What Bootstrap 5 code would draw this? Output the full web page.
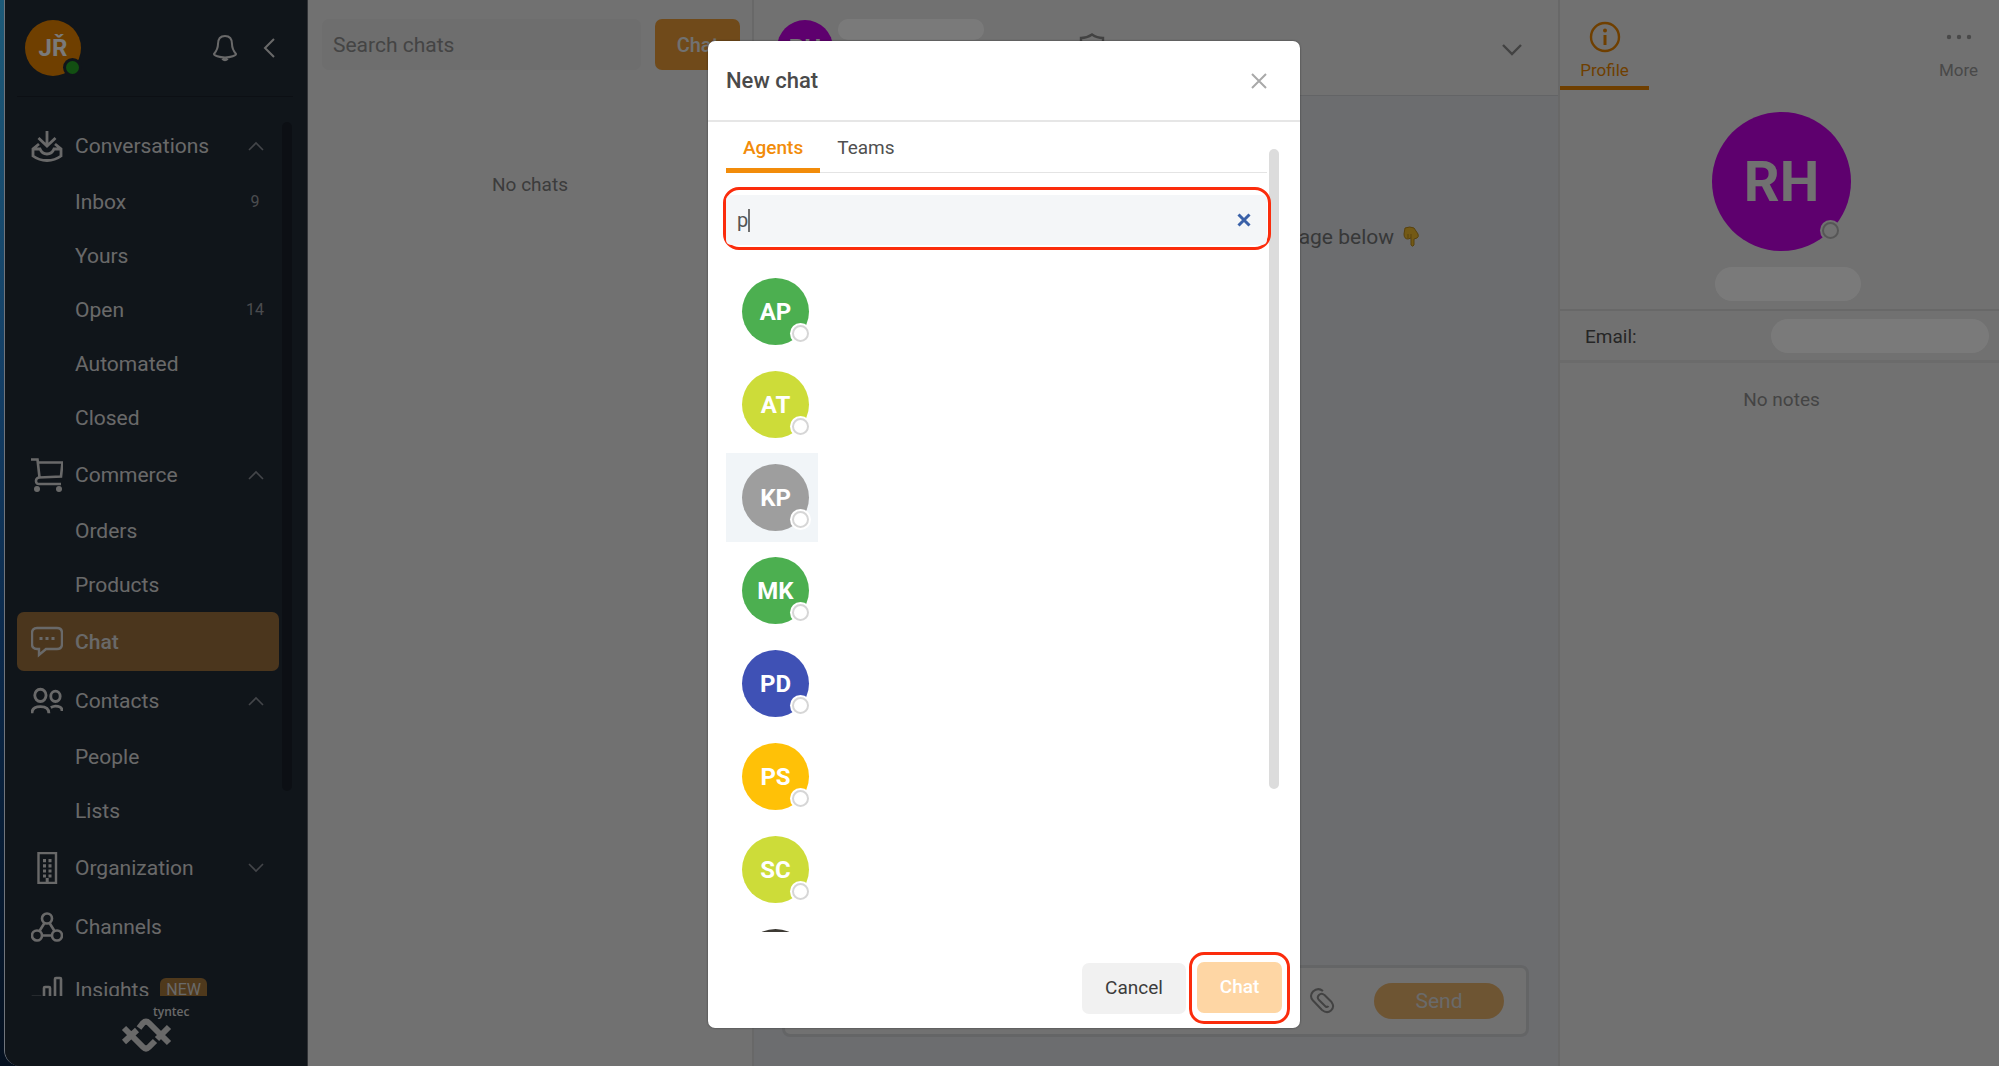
<!DOCTYPE html>
<html lang="en">
<head>
<meta charset="utf-8">
<meta name="viewport" content="width=device-width, initial-scale=1">
<title>Chat</title>
<link href="https://cdn.jsdelivr.net/npm/bootstrap@5.3.0/dist/css/bootstrap.min.css" rel="stylesheet">
<style>
  html, body { height: 100%; }
  body { font-family: Roboto, "Liberation Sans", sans-serif; font-size: 20px; line-height: 24px; color: #4a4a4a; overflow: hidden;
    background: linear-gradient(#1d5a78, #143f66 35%, #0c2a4c 60%, #05101f); }
  svg { display: block; fill: none; stroke: currentColor; flex: none; }
  a { color: inherit; text-decoration: none; }

  /* application window */
  .app-window { width: 100vw; height: 100%; margin-left: 4px; border-left: 1px solid #70757c; border-bottom-left-radius: 16px; background: #232c38; }

  /* sidebar */
  .side { width: 303px; border-right: 1px solid #666c74; color: #dcdcdc; padding: 0 12px; background: #232c38; font-size: 21px; }
  .side-top { height: 97px; border-bottom: 1px solid #1a212a; padding: 0 17px 0 8px; margin-right: 2px; font-size: 24px; flex: none; }
  .side-nav { margin-top: 19px; min-height: 0; }
  .side-list { width: 262px; }
  .side-item { height: 59px; padding: 0 14px; }
  .side-item .side-icon { width: 32px; margin-right: 12px; }
  .side-item .chev { color: #8c9198; }
  .side-item.is-active { background: #9e723e; border-radius: 7px; font-weight: 500; }
  .side-sub { height: 54px; padding: 0 12px 0 58px; }
  .side-count { font-size: 16px; width: 24px; text-align: center; color: #9b9fa4; }
  .side-thumb { width: 10px; height: 76%; border-radius: 5px; background: #19212a; margin: 6px 0 0 3px; }
  .side-foot { height: 70px; flex: none; }
  .new-tag { background: #a6783c; font-size: 16px; line-height: 24px; padding: 0 6px; border-radius: 6px; margin-left: 11px; font-weight: 400; }
  .brand-name { font-family: "Open Sans", sans-serif; font-weight: 600; font-size: 12px; line-height: 16px; }

  /* avatars */
  .avatar { border-radius: 50%; color: #fff; font-weight: 700; flex: none; position: relative; display: flex; align-items: center; justify-content: center; }
  .avatar-sm { width: 56px; height: 56px; font-size: 24px; }
  .avatar-md { width: 67px; height: 67px; font-size: 24px; }
  .avatar-xl { width: 139px; height: 139px; font-size: 56px; color: #ececec; }
  .presence { position: absolute; right: 0; bottom: 3px; width: 17px; height: 17px; border-radius: 50%; background: #fff; border: 2px solid #d6d6d6; box-shadow: 0 0 0 2px #fff; }
  .avatar-xl .presence { right: 12px; bottom: 12px; background: #ececec; border-color: #b4b4b4; box-shadow: 0 0 0 2px #ececec; }
  .presence-on { width: 13px; height: 13px; right: 2px; bottom: 2px; background: #26a626; border: 0; box-shadow: 0 0 0 3px #232c38; }
  .bg-user { background: #e98500; }
  .bg-contact { background: #c400e5; }

  /* chat list */
  .chat-list { width: 446px; background: #ececec; border-right: 2px solid #dadada; }
  .chat-tools { padding: 19px 12px 0 14px; gap: 14px; }
  .search-box { background: #e5e5e5; border: 0; border-radius: 7px; height: 51px; padding: 1px 11px 0; font-size: 21px; color: #777; }
  .search-box::placeholder { color: #8f8f8f; opacity: 1; }
  .btn-main { background: #eb9c38; color: #ececec; border: 0; border-radius: 7px; width: 85px; height: 51px; font-size: 20px; font-weight: 500; flex: none; }
  .empty-note { font-size: 19px; }
  .chat-list .empty-note { color: #7d7d7d; padding-top: 103px; }
  .profile .empty-note { color: #8f8f8f; padding-top: 25px; }

  /* conversation */
  .conv { background: #e1e3e9; min-width: 0; }
  .conv-head { height: 96px; background: #ececec; border-bottom: 1px solid #cfd1d5; padding: 20px 35px 0 23px; color: #8a8a8a; }
  .conv-name { width: 246px; padding-left: 5px; }
  .shield { margin-top: 13px; }
  .blank { background: #fff; border-radius: 17px; height: 34px; }
  .blank-name { width: 146px; height: 21px; margin-top: -1px; border-radius: 10px; }
  .conv-hint { padding: 129px 138px 0 0; color: #747676; font-size: 21px; }
  .hand { color: #b98a1c; }
  .compose { margin: 0 29px 29px 28px; height: 72px; background: #ececec; border: 3px solid #d2d3d6; border-radius: 8px; padding: 0 22px; gap: 39px; color: #8a8a8a; }
  .btn-send { background: #e5b16c; color: #dedede; border: 0; border-radius: 18px; width: 130px; height: 36px; padding: 0; font-size: 21px; line-height: 36px; }

  /* profile */
  .profile { width: 445px; background: #ececec; border-left: 2px solid #dadada; }
  .ptab { width: 89px; height: 90px; padding: 17px 0 0; font-size: 17px; border: 0; border-bottom: 4px solid transparent; background: none; color: #999; }
  .ptab svg { margin: 0 auto 5px; }
  .ptab.is-active { color: #e98500; border-color: #e98500; }
  .dots { fill: currentColor; stroke: none; }
  .who { padding-top: 22px; }
  .pname { width: 146px; margin: 16px 0 8px 13px; }
  .prow { height: 54px; border-top: 2px solid #dadada; border-bottom: 3px solid #dfdfdf; padding: 0 14px 0 25px; font-size: 19px; color: #505050; }
  .prow label { padding-top: 3px; }
  .pmail { width: 218px; }

  /* dialog */
  .modal-backdrop { position: absolute; width: 100%; height: 100%; --bs-backdrop-opacity: .52; }
  .modal { position: absolute; }
  .new-chat { width: 592px; max-width: 100%; height: calc(100% - 79px); margin: 41px auto 38px; }
  .new-chat .modal-content { height: 100%; border: 0; border-radius: 7px; color: #4a4a4a; box-shadow: 0 0 2px rgba(0,0,0,.5); }
  .new-chat .modal-header { height: 81px; padding: 0 30px 0 18px; border-bottom: 2px solid #e6e6e6; }
  .new-chat .modal-title { font-size: 22px; line-height: 28px; font-weight: 500; }
  .bare { background: none; border: 0; padding: 0; color: inherit; }
  .btn-x { color: #a9a9a9; }
  .btn-clear { color: #3a61a8; }
  .new-chat .modal-body { padding: 0 18px; min-height: 0; display: flex; overflow: hidden; }
  .pane { width: 541px; padding-top: 1px; }
  .who-tabs { border-bottom: 1px solid #e4e4e4; height: 50px; font-size: 19px; }
  .who-tab { height: 50px; padding: 4px 17px 0; border: 0; border-bottom: 5px solid transparent; background: none; color: #505050; }
  .who-tab.is-active { color: #f28c0a; border-color: #f28c0a; font-weight: 500; }
  .find { position: relative; margin: 14px -4px 0 -3px; height: 63px; border: 3px solid #fb2c0c; border-radius: 16px; padding: 5px 1px 3px 0; z-index: 1; }
  .find-field { background: #f4f6f8; border-radius: 5px; padding: 0 15px 0 11px; height: 50px; position: relative; }
  .find-field input { background: none; border: 0; outline: 0; padding: 0; font-size: 20px; color: #555; }
  .caret { position: absolute; left: 22px; top: 14px; width: 2px; height: 23px; background: #707070; }
  .people { margin-top: 17px; gap: 4px; }
  .person { width: 92px; height: 89px; padding: 11px 0 0 16px; }
  .person.is-hover { background: #f1f5f8; }
  .pane-thumb { width: 10px; height: 79%; background: #dcdcdc; border-radius: 5px; margin: 27px 0 0 2px; }
  .new-chat .modal-footer { height: 96px; border: 0; padding: 20px 10px 4px; gap: 3px; flex-wrap: nowrap; }
  .new-chat .modal-footer > * { margin: 0; }
  .btn-plain { width: 104px; height: 51px; background: #f1f1f1; border: 0; border-radius: 7px; font-size: 19px; color: #3c3c3c; }
  .ringed { border: 3px solid #fb2c0c; border-radius: 15px; padding: 7px 5px 8px; }
  .btn-pale { width: 85px; height: 51px; background: #fed6a4; color: #fff; border: 0; border-radius: 7px; font-size: 19px; font-weight: 500; display: block; }
</style>
</head>
<body>
<div class="app-window d-flex position-relative overflow-hidden">

  <aside class="side d-flex flex-column flex-shrink-0">
    <div class="side-top d-flex align-items-center">
      <div class="avatar avatar-sm bg-user">JŘ<span class="presence presence-on"></span></div>
      <button class="bare ms-auto" aria-label="Notifications"><svg width="26" height="28" viewBox="0 0 26 28" stroke-width="2" stroke-linejoin="round"><path d="M13 2C8 2 6 5.500 6 10c0 5-1.500 7-4 10 0 1.500 5 3.500 11 3.500S24 21.500 24 20c-2.500-3-4-5-4-10 0-4.500-2-8-7-8z"/><path d="M10.500 24.500q2.500 2.500 5 0" stroke-width="3"/></svg></button>
      <button class="bare ms-4" aria-label="Collapse"><svg width="14" height="22" viewBox="0 0 14 22" stroke-width="2"><path d="M12 2L3 11l9 9"/></svg></button>
    </div>

    <div class="side-nav d-flex flex-grow-1 overflow-hidden">
      <nav class="side-list flex-shrink-0">
        <a href="#" class="side-item d-flex align-items-center"><svg class="side-icon" width="32" height="32" viewBox="0 0 32 32" stroke-width="2.800"><path d="M16 1v14M7.500 8l8.500 8 8.500-8"/><path d="M8 14l-6 5v7q6 4.500 14 4.500T30 26v-7l-6-5M2 19h7q2 5 7 5t7-5h7"/></svg>Conversations<svg class="chev ms-auto" width="18" height="10" viewBox="0 0 18 10" stroke-width="1.600"><path d="M2 9l7-7 7 7"/></svg></a>
        <a href="#" class="side-sub d-flex align-items-center justify-content-between">Inbox<span class="side-count">9</span></a>
        <a href="#" class="side-sub d-flex align-items-center">Yours</a>
        <a href="#" class="side-sub d-flex align-items-center justify-content-between">Open<span class="side-count">14</span></a>
        <a href="#" class="side-sub d-flex align-items-center">Automated</a>
        <a href="#" class="side-sub d-flex align-items-center">Closed</a>

        <a href="#" class="side-item d-flex align-items-center"><svg class="side-icon" width="32" height="34" viewBox="0 0 32 34" stroke-width="2.600"><path d="M0 1.500h6.500l2 18L30 18.500l1.500-14H7M9 19.500q-4 0-4 3.500t4 3h21"/><circle cx="6" cy="31" r="3" fill="currentColor" stroke="none"/><circle cx="28" cy="31" r="3" fill="currentColor" stroke="none"/></svg>Commerce<svg class="chev ms-auto" width="18" height="10" viewBox="0 0 18 10" stroke-width="1.600"><path d="M2 9l7-7 7 7"/></svg></a>
        <a href="#" class="side-sub d-flex align-items-center">Orders</a>
        <a href="#" class="side-sub d-flex align-items-center">Products</a>

        <a href="#" class="side-item is-active d-flex align-items-center"><svg class="side-icon" width="32" height="32" viewBox="0 0 32 32" stroke-width="2.400"><path d="M6 2h20q5 0 5 5v11q0 5-5 5H15l-7 6v-6H6q-5 0-5-5V7q0-5 5-5z"/><path d="M8.500 12.500h3M14.500 12.500h3M20.500 12.500h3" stroke-width="3"/></svg>Chat</a>

        <a href="#" class="side-item d-flex align-items-center"><svg class="side-icon" width="34" height="28" viewBox="0 0 34 28" stroke-width="3"><ellipse cx="10" cy="8" rx="6" ry="6.500"/><ellipse cx="26" cy="9" rx="5" ry="5.500"/><path d="M1 27q0-7 9-7t9 7M21 21q3-1.500 5-1.500 7 0 7 5"/></svg>Contacts<svg class="chev ms-auto" width="18" height="10" viewBox="0 0 18 10" stroke-width="1.600"><path d="M2 9l7-7 7 7"/></svg></a>
        <a href="#" class="side-sub d-flex align-items-center">People</a>
        <a href="#" class="side-sub d-flex align-items-center">Lists</a>

        <a href="#" class="side-item d-flex align-items-center"><svg class="side-icon" width="32" height="32" viewBox="0 0 32 32" stroke-width="2.400"><path d="M7.500 1h17.500v30H7.500z"/><path d="M13.500 7v18.500M19 7v18.500" stroke-width="3" stroke-dasharray="3.200 2"/><path d="M16.200 26v5" stroke-width="3"/></svg>Organization<svg class="chev ms-auto" width="18" height="10" viewBox="0 0 18 10" stroke-width="1.600"><path d="M2 1l7 7 7-7"/></svg></a>
        <a href="#" class="side-item d-flex align-items-center"><svg class="side-icon" width="32" height="30" viewBox="0 0 32 30" stroke-width="2.600"><circle cx="16" cy="6.500" r="5"/><circle cx="6" cy="23.500" r="5"/><circle cx="26" cy="23.500" r="5"/><path d="M13.500 11L8.500 19M18.500 11l5 8M11 23.500h10"/></svg>Channels</a>
        <a href="#" class="side-item d-flex align-items-center mt-1"><svg class="side-icon" width="32" height="28" viewBox="0 0 32 28" stroke-width="2.600"><path d="M2 28v-7h7v7zM13 28V12q0-1 1-1h4q1 0 1 1v16zM24 28V3q0-1 1-1h4q1 0 1 1v25z"/></svg>Insights<span class="new-tag">NEW</span></a>
      </nav>
      <div class="side-thumb"></div>
    </div>

    <div class="side-foot d-flex justify-content-center">
      <svg width="90" height="62" viewBox="0 0 90 62" role="img" aria-label="tyntec"><text x="42" y="20" class="brand-name" fill="currentColor" stroke="none">tyntec</text><path d="M13 32l19 19q3 3 6 0l6-6M46 43l12-12M13 46l13-12M28 32l4-5q3-3 6 0l20 20" stroke-width="6"/></svg>
    </div>
  </aside>

  <section class="chat-list flex-shrink-0">
    <div class="chat-tools d-flex">
      <input class="search-box form-control shadow-none" type="search" placeholder="Search chats" aria-label="Search chats">
      <button class="btn btn-main">Chat</button>
    </div>
    <p class="empty-note text-center m-0">No chats</p>
  </section>

  <main class="conv flex-grow-1 d-flex flex-column">
    <header class="conv-head d-flex align-items-start">
      <div class="avatar avatar-sm bg-contact">RH</div>
      <div class="conv-name"><div class="blank blank-name"></div></div>
      <svg class="shield" width="26" height="30" viewBox="0 0 26 30" stroke-width="2.400"><path d="M2 5q6 0 11-3.500 5 3.500 11 3.500v10q0 8-11 13Q2 23 2 15z"/></svg>
      <button class="bare ms-auto mt-4" aria-label="Expand"><svg width="22" height="14" viewBox="0 0 22 14" stroke-width="2.400"><path d="M2 1l9 9 9-9"/></svg></button>
    </header>
    <div class="conv-hint d-flex justify-content-end align-items-center gap-2">Send your first message below
      <svg class="hand" width="18" height="22" viewBox="0 0 18 22" stroke-width="1"><path d="M3 2q5-2 9 0l4 6q1 3-1 4l-3 1v6q-1 2.500-3 0v-7l-3 1q-4 0-4-5z" fill="#f0bb2c"/><path d="M6 8v4M9 8v4"/></svg>
    </div>
    <form class="compose d-flex align-items-center justify-content-end mt-auto">
      <button type="button" class="bare" aria-label="Attach file"><svg width="26" height="26" viewBox="0 0 26 26" stroke-width="2"><path d="M14 3Q9-1 4 3.500 0 8 4 12.500l9 9.500q5 4 9 .500t.500-8.500l-7-7q-3-2.500-5.500 0t0 5l6.500 6.500q2 1 3-.500"/></svg></button>
      <button type="button" class="btn btn-send">Send</button>
    </form>
  </main>

  <aside class="profile flex-shrink-0">
    <div class="d-flex justify-content-between">
      <button class="ptab is-active"><svg width="32" height="32" viewBox="0 0 32 32" stroke-width="2.400"><circle cx="16" cy="16" r="14"/><path d="M16 14v10" stroke-width="3"/><circle cx="16" cy="9.500" r="2" fill="currentColor" stroke="none"/></svg>Profile</button>
      <button class="ptab"><svg class="dots" width="32" height="32" viewBox="0 0 32 32"><circle cx="6" cy="16" r="2.200"/><circle cx="16" cy="16" r="2.200"/><circle cx="26" cy="16" r="2.200"/></svg>More</button>
    </div>
    <div class="who d-flex flex-column align-items-center">
      <div class="avatar avatar-xl bg-contact">RH<span class="presence"></span></div>
      <div class="blank pname"></div>
    </div>
    <div class="prow d-flex align-items-center justify-content-between"><label>Email:</label><span class="blank pmail"></span></div>
    <p class="empty-note text-center m-0">No notes</p>
  </aside>

  <div class="modal-backdrop show"></div>
  <div class="modal d-block" tabindex="-1" role="dialog" aria-labelledby="dlg-title">
    <div class="modal-dialog new-chat">
      <div class="modal-content">
        <div class="modal-header">
          <h5 class="modal-title" id="dlg-title">New chat</h5>
          <button class="bare btn-x ms-auto" aria-label="Close"><svg width="22" height="22" viewBox="0 0 22 22" stroke-width="2"><path d="M4 4l14 14M18 4L4 18"/></svg></button>
        </div>
        <div class="modal-body">
          <div class="pane flex-shrink-0">
            <div class="who-tabs d-flex">
              <button class="who-tab is-active">Agents</button>
              <button class="who-tab">Teams</button>
            </div>
            <div class="find">
              <div class="find-field d-flex align-items-center">
                <input class="flex-grow-1" type="text" value="p" aria-label="Search agents"><span class="caret"></span>
                <button class="bare btn-clear" aria-label="Clear"><svg width="16" height="16" viewBox="0 0 16 16" stroke-width="3"><path d="M2.500 2.500l11 11M13.500 2.500l-11 11"/></svg></button>
              </div>
            </div>
            <div class="people d-flex flex-column">
              <div class="person"><div class="avatar avatar-md" style="background:#4caf50">AP<span class="presence"></span></div></div>
              <div class="person"><div class="avatar avatar-md" style="background:#cddc39">AT<span class="presence"></span></div></div>
              <div class="person is-hover"><div class="avatar avatar-md" style="background:#9e9e9e">KP<span class="presence"></span></div></div>
              <div class="person"><div class="avatar avatar-md" style="background:#4caf50">MK<span class="presence"></span></div></div>
              <div class="person"><div class="avatar avatar-md" style="background:#3f51b5">PD<span class="presence"></span></div></div>
              <div class="person"><div class="avatar avatar-md" style="background:#ffc107">PS<span class="presence"></span></div></div>
              <div class="person"><div class="avatar avatar-md" style="background:#cddc39">SC<span class="presence"></span></div></div>
              <div class="person"><div class="avatar avatar-md" style="background:#3d3a34"></div></div>
            </div>
          </div>
          <div class="pane-thumb"></div>
        </div>
        <div class="modal-footer align-items-center">
          <button class="btn btn-plain">Cancel</button>
          <div class="ringed"><button class="btn btn-pale">Chat</button></div>
        </div>
      </div>
    </div>
  </div>
</div>
<script src="https://cdn.jsdelivr.net/npm/bootstrap@5.3.0/dist/js/bootstrap.bundle.min.js"></script>
</body>
</html>
